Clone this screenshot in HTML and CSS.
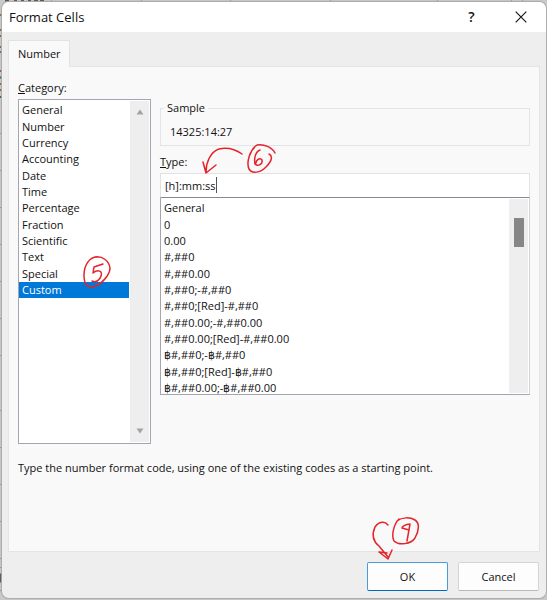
FILE: index.html
```html
<!DOCTYPE html>
<html lang="en">
<head>
    <meta charset="UTF-8">
    <meta name="viewport" content="width=device-width, initial-scale=1.0">
    <title>Format Cells</title>
    <link rel="stylesheet" href="styles.css">
</head>
<body>
    <!-- Worksheet edge behind the dialog -->
    <svg class="sheet" aria-hidden="true">
        <path d="M5 0h4M14 0h3M21 0h3M28 0h3M34 0h4M40 0h4" stroke="#5c5148" stroke-width="3"/>
        <path d="M51.5 0v3M141.5 0v3M230.5 0v3M330.5 0v3M437.5 0v3M511.5 0v3M522.5 0v3" stroke="#a0a0a0"/>
        <path d="M0 15h2M0 30h2M0 36h1M0 47h1M0 52h2M0 71h2M0 84h2M0 90h2" stroke="#8b6238" stroke-width="2"/>
        <path d="M0 77.5h2M0 97h2" stroke="#1d7044" stroke-width="2"/>
        <path d="M0 133.5h2M0 170.5h2M0 207.5h2M0 244.5h2M0 281.5h2M0 318.5h2M0 355.5h2M0 410.5h2M0 447.5h2M0 484.5h2M0 521.5h2M0 558.5h2M0 567.5h2M0 590.5h2" stroke="#969696"/>
        <path d="M0 578h2" stroke="#555" stroke-width="9"/>
    </svg>

    <form class="dialog">
        <header class="titlebar">
            <h1>Format Cells</h1>
            <button type="button" class="title-btn" aria-label="Help">?</button>
            <button type="button" class="title-btn" aria-label="Close">
                <svg width="12" height="12" viewBox="0 0 12 12"><path d="M.7 .7l10.6 10.6M11.3 .7L.7 11.3" stroke="#1a1a1a" stroke-width="1.2" fill="none"/></svg>
            </button>
        </header>

        <nav class="tabs">
            <button type="button" class="tab">Number</button>
        </nav>

        <main class="panel">
            <div class="columns">
                <div class="category">
                    <label for="category"><u>C</u>ategory:</label>
                    <div class="list-frame category-frame">
                        <select id="category" class="list" size="20">
                            <option>General</option>
                            <option>Number</option>
                            <option>Currency</option>
                            <option>Accounting</option>
                            <option>Date</option>
                            <option>Time</option>
                            <option>Percentage</option>
                            <option>Fraction</option>
                            <option>Scientific</option>
                            <option>Text</option>
                            <option>Special</option>
                            <option selected>Custom</option>
                        </select>
                        <div class="scrollbar">
                            <svg width="8" height="6" viewBox="0 0 8 6"><path d="M4 .5L7.5 5.5H.5z" fill="#a3a3a3"/></svg>
                            <svg width="8" height="6" viewBox="0 0 8 6"><path d="M4 5.5L7.5 .5H.5z" fill="#a3a3a3"/></svg>
                        </div>
                    </div>
                </div>

                <div class="format">
                    <fieldset class="sample">
                        <legend>Sample</legend>
                        <output>14325:14:27</output>
                    </fieldset>
                    <label for="type"><u>T</u>ype:</label>
                    <div class="type-field">
                        <input type="text" id="type" value="[h]:mm:ss">
                        <span class="caret"></span>
                    </div>
                    <div class="list-frame type-frame">
                        <select class="list" size="12" aria-label="Format codes">
                            <option>General</option>
                            <option>0</option>
                            <option>0.00</option>
                            <option>#,##0</option>
                            <option>#,##0.00</option>
                            <option>#,##0;-#,##0</option>
                            <option>#,##0;[Red]-#,##0</option>
                            <option>#,##0.00;-#,##0.00</option>
                            <option>#,##0.00;[Red]-#,##0.00</option>
                            <option>฿#,##0;-฿#,##0</option>
                            <option>฿#,##0;[Red]-฿#,##0</option>
                            <option>฿#,##0.00;-฿#,##0.00</option>
                        </select>
                        <div class="scrollbar">
                            <span class="thumb"></span>
                        </div>
                    </div>
                </div>
            </div>
            <p class="hint">Type the number format code, using one of the existing codes as a starting point.</p>
        </main>

        <footer class="actions">
            <button type="submit" class="btn btn-default">OK</button>
            <button type="button" class="btn">Cancel</button>
        </footer>
    </form>

    <!-- Handwritten step marks -->
    <svg class="marks" width="547" height="600" viewBox="0 0 547 600" aria-hidden="true">
        <!-- 5 -->
        <path d="M98 257C90 256 84 265 84 275C84 284 87 288 93 287C101 285 110 275 110 268C109 261 103 256 95 257"/>
        <path d="M103 264L94 267L93 273C98 269 103 271 101 276C100 280 96 283 92 281"/>
        <!-- 6 -->
        <path d="M275 153C272 147 264 144 257 145C250 150 246 162 249 169C252 174 260 173 266 167C272 161 273 156 269 154"/>
        <path d="M260 150C255 152 254 159 255 164C258 167 263 164 262 160C260 157 256 160 256 163"/>
        <path d="M242 154C235 149 227 147 219 149C210 152 206 163 206 172M203 162L206 173L216 165"/>
        <!-- 9 -->
        <path d="M399 519C394 524 391 535 394 541C399 546 411 544 415 538C419 531 420 523 415 520C410 517 402 517 397 521"/>
        <path d="M410 524C405 524 402 527 402 528L409 530M410 524L407 541"/>
        <path d="M388 525C385 521 379 521 375 527C371 536 374 542 379 546L388 557M379 552L388 559L392 550M379 552L387 553"/>
    </svg>
</body>
</html>
```

FILE: styles.css
```css
* {
    box-sizing: border-box;
}
body {
    margin: 0;
    min-height: 100vh;
    padding: 2px 1px 2px 2px;
    display: flex;
    background: #c9c9c9;
    color: #111111;
    font-family: "Open Sans", "Noto Sans", sans-serif;
    font-size: 11px;
    line-height: 16px;
}
button, input, select {
    font: inherit;
    color: inherit;
}
.sheet {
    position: absolute;
    top: 0;
    left: 0;
    width: 100%;
    height: 100%;
}
.dialog {
    position: relative;
    flex: 1;
    display: flex;
    flex-direction: column;
    background: #eeeeee;
    border-radius: 7px;
    overflow: hidden;
    box-shadow: 0 0 1px 1px #aaaaaa;
}

/* Title bar */
.titlebar {
    display: flex;
    align-items: center;
    height: 30px;
    padding: 0 1px 0 7px;
    background: #ffffff;
}
.titlebar h1 {
    flex: 1;
    margin: 0;
    font-size: 13px;
    font-weight: normal;
}
.title-btn {
    display: flex;
    align-items: center;
    justify-content: center;
    width: 49px;
    height: 30px;
    padding: 0;
    border: none;
    background: none;
    font-size: 14px;
    font-weight: 600;
}

/* Tabs and panel */
.tabs {
    display: flex;
    padding: 8px 6px 0;
}
.tab {
    height: 27px;
    padding: 0 8px 0 9px;
    border: 1px solid #e2e2e2;
    border-bottom: none;
    margin-bottom: -1px;
    background: #f9f9f9;
    position: relative;
}
.panel {
    flex: 1;
    margin: 0 6px;
    padding: 13px 9px;
    background: #f9f9f9;
    border: 1px solid #e4e4e4;
}
.columns {
    display: flex;
    gap: 9px;
}
label {
    display: block;
}
.category {
    width: 133px;
}
.format {
    flex: 1;
    padding-top: 20px;
}

/* Lists */
.list-frame {
    display: flex;
    background: #ffffff;
    border: 1px solid #a5a5b1;
}
.category-frame {
    height: 345px;
    margin-top: 3px;
}
.type-frame {
    height: 197px;
    border-top: none;
    border-right-color: #d4d4d4;
}
.list {
    flex: 1;
    min-width: 0;
    margin: 0;
    padding: 2px 0 0;
    border: none;
    outline: none;
    background: #ffffff;
    overflow: hidden;
}
.list option {
    height: 16px;
    min-height: 16px;
    padding: 0 3px;
    line-height: 16px;
}
.list option:nth-child(3n+1) {
    height: 17px;
}
.list option:checked {
    background: #0078d7 linear-gradient(#0078d7, #0078d7);
    color: #ffffff;
    -webkit-text-fill-color: #ffffff;
}
.scrollbar {
    display: flex;
    flex-direction: column;
    align-items: center;
    justify-content: space-between;
    width: 19px;
    margin: 1px;
    padding: 8px 0;
    background: #eeeeee;
}
.type-frame .scrollbar {
    padding-top: 19px;
}
.thumb {
    width: 10px;
    height: 29px;
    background: #868686;
}

/* Format column */
.sample {
    margin: 0 0 8px;
    height: 46px;
    padding: 8px 9px;
    border: 1px solid #e4e4e4;
}
.sample legend {
    padding: 0 3px;
    margin-left: -6px;
}
.sample output {
    display: block;
}
.type-field {
    position: relative;
    margin-top: 3px;
}
.type-field input {
    display: block;
    width: 100%;
    height: 25px;
    padding: 0 4px;
    border: 1px solid #e2e2e2;
    border-bottom-color: #868695;
    border-radius: 0;
    background: #ffffff;
    outline: none;
}
.caret {
    position: absolute;
    top: 4px;
    left: 56px;
    width: 1px;
    height: 16px;
    background: #555555;
}
.hint {
    margin: 16px 0 0;
}

/* Buttons */
.actions {
    display: flex;
    justify-content: flex-end;
    gap: 10px;
    padding: 10px 7px 7px;
}
.btn {
    width: 81px;
    height: 29px;
    border: 1px solid #d4d4d4;
    border-bottom-color: #b8b8b8;
    border-radius: 2px;
    background: #fdfdfd;
}
.btn-default {
    border-color: #4a9bdc;
    border-bottom-color: #0067c0;
}

.marks {
    position: absolute;
    top: 0;
    left: 0;
    fill: none;
    stroke: #e3242b;
    stroke-width: 1.5;
    stroke-linecap: round;
    stroke-linejoin: round;
    pointer-events: none;
}
```
